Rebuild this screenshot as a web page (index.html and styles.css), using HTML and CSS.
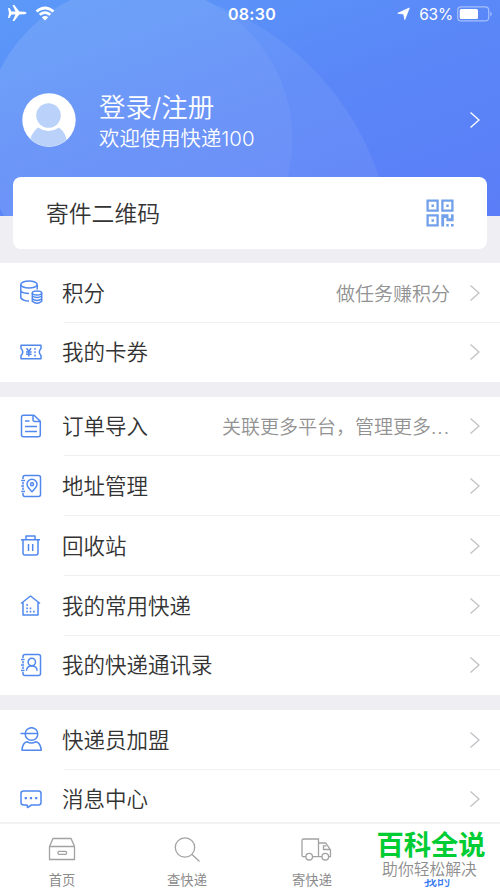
FILE: index.html
```html
<!DOCTYPE html>
<html lang="zh-CN">
<head>
<meta charset="utf-8">
<title>我的</title>
<link rel="stylesheet" href="styles.css">
</head>
<body>
<svg class="defs" aria-hidden="true"><symbol id="chev" viewBox="0 0 12 18"><path d="M1.500 1.500 10 9l-8.500 7.500"/></symbol></svg>
<div class="app">
<header class="hero">
  <svg class="hero-art" viewBox="0 0 500 216"><defs><mask id="outside"><path fill="#fff" d="M150 0h350v216H150z"/><circle cx="138" cy="139" r="154.500" fill="#000"/></mask></defs><circle class="outer" cx="115" cy="264" r="278" mask="url(#outside)"/><circle class="inner" cx="138" cy="139" r="154.500"/></svg>
  <div class="status">
    <div class="status-left">
      <svg width="20" height="18" viewBox="0 0 20 18"><path fill="#fff" d="M1 4h1.500l2 3.500h4L5.500 1H7.300l5 6.600 5.200.2q2 .4 2 1.200t-2 1.200l-5.200.2-5 6.600H5.500l3-6.500h-4l-2 3.500H1l1-5z"/></svg>
      <svg width="20" height="15" viewBox="0 0 20 15" fill="none" stroke="#fff" stroke-width="2.700"><path d="M1.500 5.500q8.500-7 17 0M4.700 8.800q5.300-4.300 10.600 0"/><path fill="#fff" stroke="none" d="M6.800 11.200q3.200-2.400 6.400 0L10 14.400z"/></svg>
    </div>
    <div class="clock">08:30</div>
    <div class="status-right">
      <svg width="14" height="14" viewBox="0 0 14 14"><path fill="#fff" stroke="#fff" stroke-width=".8" stroke-linejoin="round" d="M13.300 1 8.800 12.600 7.700 7 1.800 6.300z"/></svg>
      <span class="percent">63%</span>
      <svg width="36" height="16" viewBox="0 0 36 16"><rect x=".7" y=".9" width="31" height="14" rx="3.500" fill="none" stroke="#a6bffb" stroke-width="1.200"/><rect x="2.700" y="2.900" width="18.300" height="10" rx="1.500" fill="#fff"/><path d="M33.300 5.500q3 2.500 0 5z" fill="#a6bffb"/></svg>
    </div>
  </div>
  <div class="profile">
    <svg class="avatar" viewBox="0 0 54 54"><defs><clipPath id="face"><circle cx="27" cy="27" r="26.500"/></clipPath></defs><circle cx="27" cy="27" r="26.700" fill="#fff"/><g clip-path="url(#face)" fill="#bad2fa"><circle cx="26.500" cy="22.500" r="12.300"/><path d="M6 54q3-15 10-19.500 10.500 7 21 0Q45 40 46 54z"/></g></svg>
    <div class="who"><div class="login">登录/注册</div><div class="welcome">欢迎使用快递100</div></div>
    <svg class="chev light"><use href="#chev"/></svg>
  </div>
</header>
<section class="qr-card"><span>寄件二维码</span>
  <svg width="28" height="28" viewBox="0 0 28 28" fill="none" stroke="#73a0ea" stroke-width="2.300"><path d="M1.600 1.600h10v10h-10zM16.400 1.600h10v10h-10zM1.600 16.400h10v10h-10z"/><path fill="#73a0ea" stroke="none" d="M5.500 5.500h2.400v2.400H5.500zM20.300 5.500h2.400v2.400h-2.400zM5.500 20.300h2.400v2.400H5.500zM15.300 15.300h7.200v4h2.400v-4h2.700v7h-7.200v-3.200h-2.300v8.500h-2.800zM20.300 25h2.400v2.600h-2.400zM25 25h2.600v2.600H25z"/></svg>
</section>
<main>
<section class="group">
  <div class="row"><svg class="icon" viewBox="0 0 24 24"><ellipse cx="9" cy="4.500" rx="8.200" ry="3.500"/><path d="M.8 4.500V18q1.500 3 8.200 3M17.200 4.500v5M.8 11q2 2.500 8.200 2.500M.8 17.500Q2.800 21 9 21"/><ellipse cx="17" cy="13" rx="4.700" ry="2"/><path d="M12.300 13v8.200q4.700 4 9.400 0V13M12.300 16q4.700 3.200 9.400 0M12.300 18.800q4.700 3.200 9.400 0"/></svg><span class="label">积分</span><span class="note">做任务赚积分</span><svg class="chev"><use href="#chev"/></svg></div>
  <div class="row"><svg class="icon" viewBox="0 0 24 24"><path d="M1 5.300h20v3.200q-3.500 3.500 0 7v3.200H1v-3.200q3.500-3.500 0-7z"/><path d="m6.500 8.300 2.300 2.900 2.300-2.900M8.800 11.200v5.300M6 12h5.600M6 14.300h5.600"/><path stroke-dasharray="1.800 1.500" d="M15 8v9"/></svg><span class="label">我的卡券</span><svg class="chev"><use href="#chev"/></svg></div>
</section>
<section class="group">
  <div class="row"><svg class="icon" viewBox="0 0 24 24"><path d="M3.500 1.200H14l6.300 6v13.500q0 2-2 2H3.500q-2 0-2-2V3.200q0-2 2-2zM13 1.500v4q0 2 2 2h5M5 7h4.500M5 12.500h12M5 17.500h12"/></svg><span class="label">订单导入</span><span class="note">关联更多平台，管理更多<span class="dots">...</span></span><svg class="chev"><use href="#chev"/></svg></div>
  <div class="row"><svg class="icon" viewBox="0 0 24 24"><path d="M3 5V3.500q0-2 2-2h13.500q2 0 2 2v17q0 2-2 2H5q-2 0-2-2V19M3 8v2.500M3 13.500V16M1.200 6.500H5M1.200 12H4M1.200 17.500H5"/><path d="M12 17.700q-5-5-5-7.500a5 5 0 0 1 10 0q0 2.500-5 7.500z"/><circle cx="12" cy="10.200" r="1.500"/></svg><span class="label">地址管理</span><svg class="chev"><use href="#chev"/></svg></div>
  <div class="row"><svg class="icon" viewBox="0 0 24 24"><path d="M1 6.800h19M6 6.500V3h9v3.500M3 7v13q0 2 2 2h11q2 0 2-2V7M8.500 11v7M12.700 11v7"/></svg><span class="label">回收站</span><svg class="chev"><use href="#chev"/></svg></div>
  <div class="row"><svg class="icon" viewBox="0 0 24 24"><path d="m1 10.500 9.500-7.500 9.500 7.500M3 9.500V22h15V9.500"/><path class="fill" d="M6.300 11h1.600v1.700H6.300zM6.300 14.500h1.600v1.700H6.300zM6.300 17.800h1.600v1.700H6.300zM9.700 14.500h1.600v1.700H9.700zM9.700 17.800h1.600v1.700H9.700zM13.100 17.800h1.600v1.700h-1.600z"/></svg><span class="label">我的常用快递</span><svg class="chev"><use href="#chev"/></svg></div>
  <div class="row"><svg class="icon" viewBox="0 0 24 24"><path d="M3 5V3.500q0-2 2-2h13.500q2 0 2 2v17q0 2-2 2H5q-2 0-2-2V19M3 8v2.500M3 13.500V16M1 6.500h3.500M1 12h3M1 17.500h3.500"/><circle cx="11.800" cy="9" r="3.700"/><path d="M6.500 17.800q0-4.600 5.300-5.100 5.300.5 5.300 5.100"/></svg><span class="label">我的快递通讯录</span><svg class="chev"><use href="#chev"/></svg></div>
</section>
<section class="group">
  <div class="row"><svg class="icon" viewBox="0 0 24 24"><circle cx="11.500" cy="7" r="6.300"/><path d="M.5 6.500h17M7 14.700q4.500 2.800 9 0 4.500 1 5.200 8.500H2q.5-7.500 5-8.500z"/></svg><span class="label">快递员加盟</span><svg class="chev"><use href="#chev"/></svg></div>
  <div class="row"><svg class="icon" viewBox="0 0 24 24"><path d="M3.500 4h15Q21 4 21 6.500v9q0 2.500-2.500 2.500h-7L7.500 20.500 7.100 18H3.500Q1 18 1 15.500v-9Q1 4 3.500 4z"/><path class="fill" d="M4.700 10h2.200v2.200H4.700zM9.900 10h2.200v2.200H9.900zM15.100 10h2.200v2.200h-2.200z"/></svg><span class="label">消息中心</span><svg class="chev"><use href="#chev"/></svg></div>
</section>
</main>
<nav class="tabs">
  <div class="tab"><svg viewBox="0 0 32 28"><path d="M3.500 10.500 7 2.500h18l3.500 8v13H3.500zM3.500 10.500h25"/><rect x="12" y="15.300" width="8.500" height="3" rx="1"/></svg><span>首页</span></div>
  <div class="tab"><svg viewBox="0 0 32 28"><circle cx="14" cy="11.500" r="9.700"/><path d="m21 18.500 7.500 7"/></svg><span>查快递</span></div>
  <div class="tab"><svg class="truck" viewBox="0 0 32 28"><path d="M5 20.700H2.500q-1.500 0-1.500-1.500V4.500Q1 3 2.500 3h15v17.700h-6M17.500 7h6.500q1 0 1.500 1l4 6v6.700h-2M17.500 20.700h3.500M29 13.500h-6.500V9.800h3"/><circle cx="8.200" cy="20.700" r="3.300"/><circle cx="24.300" cy="20.700" r="3.300"/></svg><span>寄快递</span></div>
  <div class="tab active"><span>我的</span></div>
</nav>
<div class="brand"><strong>百科全说</strong><span>助你轻松解决</span></div>
</div>
</body>
</html>
```
FILE: styles.css
```css
* { box-sizing: border-box; }
body { margin: 0; font-family: Inter, "Noto Sans CJK SC", sans-serif; color: #333; }
.defs { position: absolute; width: 0; height: 0; }
.app { position: relative; width: 500px; height: 889px; overflow: hidden; background: #eeeef3; display: flex; flex-direction: column; }
.hero { position: relative; flex: none; height: 216px; color: #fff; background: linear-gradient(160deg, #5b99f8 0%, #5a87f8 50%, #5b7df7 100%); }
.hero-art { position: absolute; inset: 0; width: 500px; height: 216px; fill: #fff; }
.outer { fill-opacity: .065; }
.inner { fill-opacity: .11; }
.status { position: relative; height: 28px; display: grid; grid-template-columns: 1fr auto 1fr; align-items: center; padding: 0 7px; }
.status-left { display: flex; align-items: center; gap: 8px; }
.status-left svg { position: relative; top: -1px; }
.status-right { display: flex; align-items: center; justify-content: flex-end; }
.clock { font-size: 16px; font-weight: 600; letter-spacing: .3px; padding-left: 4px; }
.percent { font-size: 15.500px; margin: 0 4px 0 9px; letter-spacing: -.2px; }
.profile { position: relative; display: flex; align-items: center; height: 64px; margin: 60px 19px 0 22px; }
.avatar { width: 54px; height: 54px; }
.who { margin-left: 23px; flex: 1; font-weight: 350; padding-top: 5px; }
.login { font-size: 26.500px; line-height: 32px; }
.welcome { font-size: 20.400px; line-height: 32px; }
.chev { width: 12px; height: 18px; margin-top: 1px; fill: none; stroke: #c2c2c6; stroke-width: 1.300; flex: none; }
.chev.light { margin-top: 0; stroke: #fff; }
.qr-card { position: relative; flex: none; height: 72px; margin: -39px 13px 14px; padding: 0 33px; border-radius: 8px; background: #fff; display: flex; align-items: center; justify-content: space-between; font-size: 22.800px; }
.qr-card span, .label { font-weight: 350; padding-bottom: 2px; }
main { flex: none; display: flex; flex-direction: column; gap: 14.500px; }
.group { background: #fff; }
.row { height: 59.750px; display: flex; align-items: center; position: relative; padding: 0 19px 1px 20px; }
.group:first-child .row { height: 59.500px; }
.row + .row::before { content: ""; position: absolute; top: -1px; left: 64px; right: 0; height: 1px; background: #f0f0f2; }
.icon { width: 24px; height: 24px; margin-right: 18px; fill: none; stroke: #5088ee; stroke-width: 1.500; stroke-linejoin: round; flex: none; }
.icon .fill { fill: #5088ee; stroke: none; }
.label { font-size: 21.500px; flex: 1; white-space: nowrap; }
.note { font-size: 19px; color: #929292; margin-right: 19px; white-space: nowrap; font-weight: 350; }
.dots { letter-spacing: 1px; }
.tabs { position: absolute; left: 0; right: 0; bottom: 0; height: 67px; background: #fff; border-top: 2px solid #f2f2f3; display: grid; grid-template-columns: repeat(4, 125px); }
.tab { display: flex; flex-direction: column; align-items: center; justify-content: flex-end; color: #8b8b8b; font-size: 13.300px; line-height: 18px; padding-right: 1px; }
.tab svg { width: 32px; height: 28px; margin-bottom: 7px; fill: none; stroke: #a2a2a2; stroke-width: 1.300; }
.tab .truck { margin-left: 10px; }
.tab.active { color: #397bf2; font-weight: 500; }
.brand { position: absolute; left: 374px; top: 828px; width: 114px; height: 51px; padding-top: 2px; background: #fff; display: flex; flex-direction: column; align-items: center; white-space: nowrap; }
.brand strong { color: #0c3; font-size: 27.300px; line-height: 31.500px; font-weight: 700; }
.brand span { color: #8e8e8e; font-size: 15.800px; line-height: 16px; font-weight: 350; margin-right: 3px; }
```
